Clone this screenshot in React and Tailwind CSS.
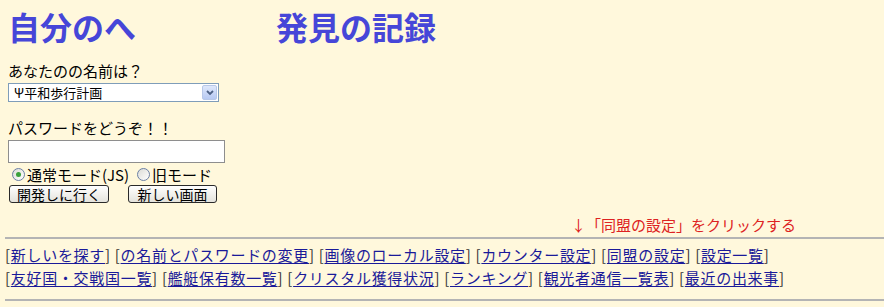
import React from "react";

const F = { fontFamily: '"Noto Sans CJK JP", "Noto Sans", sans-serif' };

function Link({ children }) {
  return (
    <span className="text-[#333]">
      [<a href="#" className="text-[#1a1a99] underline underline-offset-2">{children}</a>]
    </span>
  );
}

function Radio({ checked, label }) {
  return (
    <label className="flex items-center gap-[2px]">
      <span className="w-[13px] h-[13px] rounded-full border border-[#6b7fa5] bg-gradient-to-br from-[#dcdcd6] to-white flex items-center justify-center">
        {checked && <span className="w-[5px] h-[5px] rounded-full bg-[#3aa03a]" />}
      </span>
      <span>{label}</span>
    </label>
  );
}

function Btn({ children, w }) {
  return (
    <button className={`h-[18px] ${w} rounded-[3px] border border-[#2a2a2a] bg-gradient-to-b from-white to-[#e4e3dc] text-[14px] leading-[16px] text-black flex items-center justify-center`}>
      {children}
    </button>
  );
}

export default function App() {
  return (
    <div className="w-[884px] h-[307px] bg-[#fff8dc] overflow-hidden text-black" style={F}>
      <div className="pl-[8px] pt-[6px] h-[40px] flex text-[32px] font-bold leading-[40px] text-[#4646d8]">
        <span>自分のへ</span>
        <span className="ml-[140px]">発見の記録</span>
      </div>
      <div className="pl-[8px] pt-[21px] text-[15px] leading-[20px]">
        <div>あなたのの名前は？</div>
        <div className="mt-[2px] w-[211px] h-[19px] border border-[#7f9db9] bg-white flex items-center justify-between text-[13px]">
          <span className="pl-[5px] leading-[17px]">Ψ平和歩行計画</span>
          <span className="w-[15px] h-[15px] mr-[1px] rounded-[2px] border border-[#b8c8e8] bg-gradient-to-b from-[#dfe8fb] to-[#b7c9f2] flex items-center justify-center">
            <svg width="8" height="6" viewBox="0 0 8 6"><path d="M1 1 L4 4 L7 1" stroke="#4d6185" strokeWidth="1.8" fill="none" /></svg>
          </span>
        </div>
        <div className="mt-[16px]">パスワードをどうぞ！！</div>
        <div className="mt-[2px] w-[217px] h-[23px] border border-[#8e8e8e] bg-white" />
        <div className="mt-[3px] pl-[4px] flex gap-[8px] leading-[17px]">
          <Radio checked label="通常モード(JS)" />
          <Radio label="旧モード" />
        </div>
        <div className="mt-[2px] pl-[1px] flex gap-[19px]">
          <Btn w="w-[100px]">開発しに行く</Btn>
          <Btn w="w-[89px]">新しい画面</Btn>
        </div>
      </div>
      <div className="pl-[571px] mt-[12px] text-[15px] leading-[20px] text-[#dd2222]">↓「同盟の設定」をクリックする</div>
      <div className="ml-[5px] mt-[2px] h-[2px] bg-[#b4b4b4]" />
      <div className="pl-[5px] pt-[4px] text-[15px] leading-[23px] tracking-[0.7px]">
        <div className="flex gap-[4px] whitespace-nowrap">
          <Link>新しいを探す</Link>
          <Link>の名前とパスワードの変更</Link>
          <Link>画像のローカル設定</Link>
          <Link>カウンター設定</Link>
          <Link>同盟の設定</Link>
          <Link>設定一覧</Link>
        </div>
        <div className="flex gap-[4px] whitespace-nowrap">
          <Link>友好国・交戦国一覧</Link>
          <Link>艦艇保有数一覧</Link>
          <Link>クリスタル獲得状況</Link>
          <Link>ランキング</Link>
          <Link>観光者通信一覧表</Link>
          <Link>最近の出来事</Link>
        </div>
      </div>
      <div className="ml-[5px] mt-[10px] h-[2px] bg-[#b4b4b4]" />
    </div>
  );
}
